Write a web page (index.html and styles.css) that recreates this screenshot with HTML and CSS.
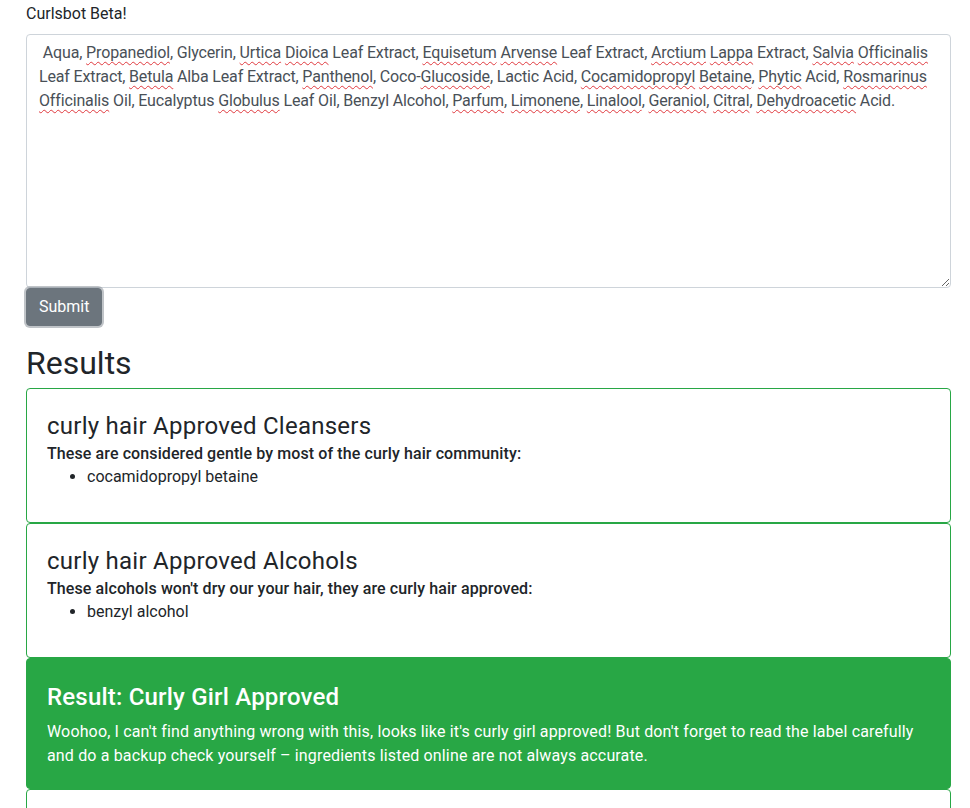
FILE: index.html
```html
<!DOCTYPE html>
<html lang="en">
<head>
    <meta charset="UTF-8">
    <title>Curlsbot Beta</title>
    <link rel="stylesheet" href="styles.css">
</head>
<body>
    <div class="page">
        <div class="brand">Curlsbot Beta!</div>
        <div class="ingredients" id="ingredients"> Aqua, <span class="typo">Propanediol</span>, Glycerin, <span class="typo">Urtica</span> <span class="typo">Dioica</span> Leaf Extract, <span class="typo">Equisetum</span> <span class="typo">Arvense</span> Leaf Extract, <span class="typo">Arctium</span> <span class="typo">Lappa</span> Extract, <span class="typo">Salvia</span> <span class="typo">Officinalis</span><br>Leaf Extract, <span class="typo">Betula</span> Alba Leaf Extract, <span class="typo">Panthenol</span>, Coco-<span class="typo">Glucoside</span>, Lactic Acid, <span class="typo">Cocamidopropyl</span> <span class="typo">Betaine</span>, <span class="typo">Phytic</span> Acid, <span class="typo">Rosmarinus</span><br><span class="typo">Officinalis</span> Oil, Eucalyptus <span class="typo">Globulus</span> Leaf Oil, Benzyl Alcohol, <span class="typo">Parfum</span>, <span class="typo">Limonene</span>, <span class="typo">Linalool</span>, <span class="typo">Geraniol</span>, <span class="typo">Citral</span>, <span class="typo">Dehydroacetic</span> Acid.</div>
        <button class="btn-submit">Submit</button>

        <h2 class="results-title">Results</h2>

        <div class="card">
            <h4 class="card-title">curly hair Approved Cleansers</h4>
            <div class="card-lead">These are considered gentle by most of the curly hair community:</div>
            <ul>
                <li>cocamidopropyl betaine</li>
            </ul>
        </div>
        <div class="card">
            <h4 class="card-title">curly hair Approved Alcohols</h4>
            <div class="card-lead">These alcohols won't dry our your hair, they are curly hair approved:</div>
            <ul>
                <li>benzyl alcohol</li>
            </ul>
        </div>
        <div class="card card-success">
            <h4 class="card-title">Result: Curly Girl Approved</h4>
            <p>Woohoo, I can't find anything wrong with this, looks like it's curly girl approved! But don't forget to read the label carefully<br>and do a backup check yourself – ingredients listed online are not always accurate.</p>
        </div>
        <div class="card card-empty"></div>
    </div>
</body>
</html>
```

FILE: styles.css
```css
html, body {
    margin: 0;
    padding: 0;
}
body {
    font-family: Roboto, "Liberation Sans", sans-serif;
    font-size: 16px;
    line-height: 24px;
    color: #212529;
    background: #fff;
}
.page {
    padding: 2px 19px 0 26px;
}
.brand {
    margin-bottom: 8px;
}
.ingredients {
    height: 240px;
    border: 1px solid #ced4da;
    border-radius: 4px;
    padding: 6px 12px;
    color: #495057;
    letter-spacing: -0.15px;
    white-space: pre-wrap;
    overflow: auto;
    resize: vertical;
}
.typo {
    text-decoration: underline wavy #e0393e;
    text-decoration-thickness: 1px;
    text-underline-offset: 3px;
}
.btn-submit {
    display: block;
    font-family: inherit;
    font-size: 16px;
    line-height: 24px;
    color: #fff;
    background: #6c757d;
    border: 1px solid #6c757d;
    border-radius: 4px;
    padding: 6px 12px;
    margin: 0;
    box-shadow: 0 0 0 2px rgba(130, 138, 145, 0.5);
}
.results-title {
    font-size: 32px;
    font-weight: 400;
    line-height: 38px;
    margin: 18px 0 6px;
}
.card {
    border: 1px solid #28a745;
    border-radius: 4px;
    padding: 20px;
}
.card-title {
    font-size: 24px;
    font-weight: 400;
    line-height: 29px;
    letter-spacing: 0.25px;
    margin: 3px 0 0;
}
.card-lead {
    font-weight: 500;
    line-height: 22px;
    letter-spacing: 0.1px;
    margin-top: 2px;
}
.card ul {
    margin: 0 0 13px;
    padding-left: 40px;
}
.card-success {
    background: #28a745;
    color: #fff;
}
.card-success .card-title {
    font-weight: 500;
    letter-spacing: 0.2px;
    margin: 4px 0 8px;
}
.card-success p {
    margin: 0;
    letter-spacing: 0.15px;
}
.card-empty {
    height: 60px;
}
```
